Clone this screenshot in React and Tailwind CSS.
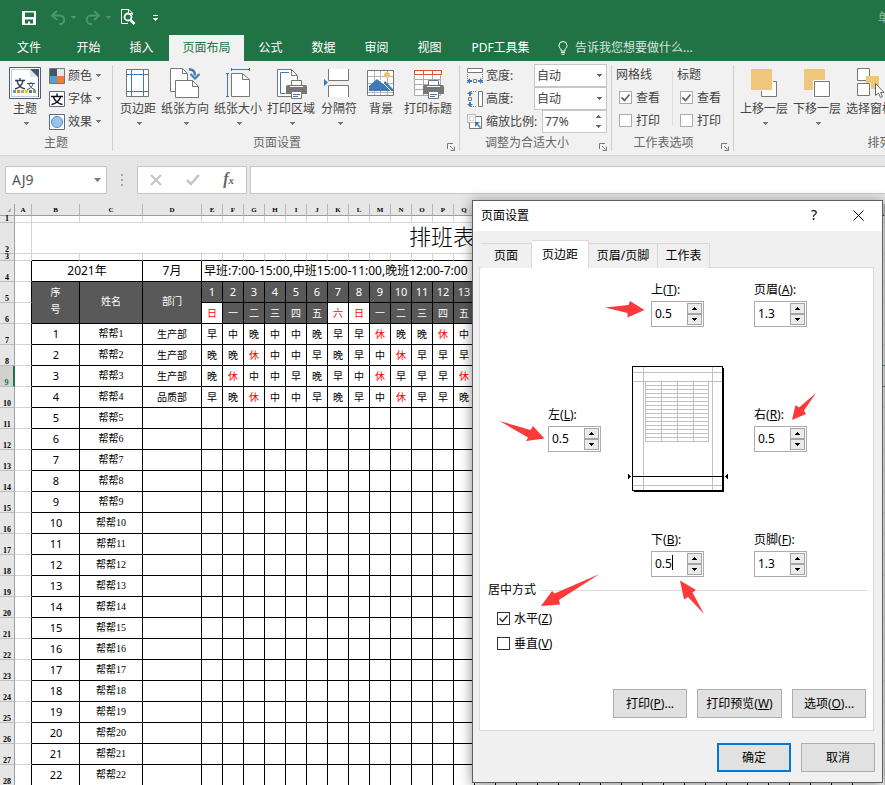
import React from "react";

const GRAY = "#797774";
const BLUE = "#3f7ab8";

function Caret({ className = "" }) {
  return (
    <svg width="5" height="3" viewBox="0 0 5 3" className={className} shapeRendering="crispEdges" aria-hidden="true">
      <path d="M0 0h5v1H0zM1 1h3v1H1zM2 2h1v1H2z" fill="currentColor" />
    </svg>
  );
}

function Icon({ box, w = 32, h = 32, children }) {
  return (
    <svg width={w} height={h} viewBox={box} fill="none" className="shrink-0" aria-hidden="true">
      {children}
    </svg>
  );
}

/* ---------- title bar and tabs ---------- */

function TitleBar() {
  return (
    <div className="flex h-[35px] shrink-0 items-center justify-between overflow-hidden pl-[21px] text-white">
      <div className="flex items-center">
        <button type="button" aria-label="保存">
          <Icon box="0 0 16 16" w={16} h={16}>
            <path d="M1 1h14v14H1z" fill="#fff" />
            <path d="M4 2.500h9v4.500H4zM4 9.500h8v4H9v-2H7v2H4z" fill="#217346" />
          </Icon>
        </button>
        <button type="button" aria-label="撤消" className="ml-[13px] flex items-center text-[#4f9370]">
          <Icon box="0 0 16 16" w={16} h={16}>
            <path d="M2 5.500h8a4 4 0 0 1 0 8.500H9" stroke="currentColor" strokeWidth="2" />
            <path d="M7 1 2 5.500 7 10" stroke="currentColor" strokeWidth="2" />
          </Icon>
          <Caret className="ml-[5px]" />
        </button>
        <button type="button" aria-label="恢复" className="ml-[9px] flex items-center text-[#4f9370]">
          <Icon box="0 0 16 16" w={16} h={16}>
            <path d="M14 5.500H6A4 4 0 0 0 6 14h1" stroke="currentColor" strokeWidth="2" />
            <path d="m9 1 5 4.500L9 10" stroke="currentColor" strokeWidth="2" />
          </Icon>
          <Caret className="ml-[5px]" />
        </button>
        <button type="button" aria-label="打印预览" className="ml-[9px] pb-[3px]">
          <Icon box="0 0 16 17" w={16} h={17}>
            <path d="M12.500 7V5L9 1.500H1.500v14H8M8.500 1.500V5.500h4" stroke="#fff" />
            <circle cx="8" cy="9" r="3.500" stroke="#fff" strokeWidth="1.800" />
            <path d="m10.500 12 4 4" stroke="#fff" strokeWidth="2.500" />
          </Icon>
        </button>
        <button type="button" aria-label="自定义快速访问工具栏" className="ml-[17px] flex flex-col items-center gap-[2px]">
          <span className="h-px w-[5px] bg-white" />
          <Caret />
        </button>
      </div>
      <span className="-mr-[5px] text-[12px] text-[#92bea5]">单</span>
    </div>
  );
}

const TABS = ["公式", "数据", "审阅", "视图"];

function TabStrip() {
  const tab = "h-full w-[53px] shrink-0";
  return (
    <nav className="flex h-[26px] shrink-0 items-center text-[12px] whitespace-nowrap text-white">
      <button type="button" className="h-full w-[62px] shrink-0 pr-1">文件</button>
      <button type="button" className={tab}>开始</button>
      <button type="button" className={tab}>插入</button>
      <button type="button" className="ml-px h-full w-[75px] shrink-0 bg-[#f1f1f1] text-[#217346]">页面布局</button>
      {TABS.map((t) => (
        <button type="button" key={t} className={tab}>{t}</button>
      ))}
      <button type="button" className="h-full w-[89px] shrink-0">PDF工具集</button>
      <button type="button" className="ml-[13px] flex h-full items-center gap-[7px] text-[#d5e6dc]">
        <Icon box="0 0 10 14" w={10} h={14}>
          <path d="M3 10V8.500C2.500 7.500 1 6.500 1 4.500a4 4 0 0 1 8 0c0 2-1.500 3-2 4V10zM3 11.500h4M3.500 13.300h3" stroke="#fff" />
        </Icon>
        告诉我您想要做什么...
      </button>
    </nav>
  );
}

/* ---------- ribbon ---------- */

function Launcher() {
  return (
    <button type="button" aria-label="更多选项" className="absolute right-[4px] bottom-0">
      <Icon box="0 0 8 8" w={8} h={8}>
        <path d="M.5 6V.5H6M3 3l3.500 3.500M7.500 3.500v4h-4" stroke="#777" />
      </Icon>
    </button>
  );
}

function Group({ title, className = "", titleClass = "", launcher, children }) {
  return (
    <section className={`relative flex h-[86px] shrink-0 flex-col border-r border-[#d2d0ce] ${className}`}>
      <div className="flex h-[71px]">{children}</div>
      <h2 className={`text-center text-[12px] leading-[16px] whitespace-nowrap text-[#666] ${titleClass}`}>{title}</h2>
      {launcher && <Launcher />}
    </section>
  );
}

function BigButton({ label, caret = true, className = "", children }) {
  return (
    <button type="button" className={`flex shrink-0 flex-col items-center whitespace-nowrap ${className}`}>
      <span className="mt-[2px] flex h-[33px] items-start">{children}</span>
      <span className="leading-[18px]">{label}</span>
      {caret && <Caret className="mt-[4px] ml-[2px] text-[#777]" />}
    </button>
  );
}

function SmallButton({ label, children }) {
  return (
    <button type="button" className="flex h-[23px] items-center">
      {children}
      <span className="ml-[3px]">{label}</span>
      <Caret className="ml-[4px] text-[#777]" />
    </button>
  );
}

function Printer({ x, y }) {
  return (
    <g transform={`translate(${x} ${y})`}>
      <path d="M5.500 7V.5h10V7" fill="#fff" stroke={GRAY} />
      <path d="M2 5h17a2 2 0 0 1 2 2v7H0V7a2 2 0 0 1 2-2z" fill={GRAY} />
      <path d="M4 5h13v2H4z" fill="#fff" />
      <path d="M4 5.500h13" stroke={BLUE} />
      <path d="M5.500 11.500h10v7h-10z" fill="#fff" stroke={GRAY} />
      <path d="M7 14.500h7M7 16.500h5" stroke={BLUE} />
    </g>
  );
}

function ThemeGroup() {
  return (
    <Group title="主题" className="w-[113px]">
      <BigButton label="主题" className="ml-[9px] w-[32px]">
        <Icon box="0 0 32 32">
          <path d="M.5.500h31v31H.5z" fill="#fff" stroke="#4a5a78" />
          <path d="M2.500 2.500h27v27h-27z" stroke="#c5cad3" />
          <path d="M21 2h9v28h-1V10h-8z" fill="#445570" />
          <path d="m21 2 8 8h-8z" fill="#dfe3ea" />
          <path d="M6 13.500h10M11 11v2.500M8 14c1 4 4 7 8 8M14 14c-1 4-4 7-8 8" stroke="#333f55" strokeWidth="1.300" />
          <path d="M18 16.500h8M22 15v1.500M20 17c1 3 3 5 6 5.500M24 17c-1 3-3 5-6 5.500" stroke="#445570" />
          <path d="M4 23h3v3H4z" fill="#5b9bd5" />
          <path d="M8 23h3v3H8z" fill="#ed7d31" />
          <path d="M12 23h3v3h-3z" fill="#a5a5a5" />
          <path d="M16 23h3v3h-3z" fill="#ffc000" />
          <path d="M20 23h3v3h-3z" fill="#4472c4" />
          <path d="M24 23h3v3h-3z" fill="#70ad47" />
        </Icon>
      </BigButton>
      <div className="-mt-px ml-[8px] flex flex-col">
        <SmallButton label="颜色">
          <Icon box="0 0 16 16" w={16} h={16}>
            <path d="M.5.500h15v15H.5z" fill="#fff" stroke={GRAY} />
            <path d="M1 1h7v7H1z" fill="#44546a" />
            <path d="M8 1h7v7H8z" fill="#e7e6e6" />
            <path d="M1 8h7v7H1z" fill="#5b9bd5" />
            <path d="M8 8h7v7H8z" fill="#ed7d31" />
          </Icon>
        </SmallButton>
        <SmallButton label="字体">
          <Icon box="0 0 16 16" w={16} h={16}>
            <path d="M.5.500h15v15H.5z" fill="#fff" stroke="#5b6b85" />
            <path d="M2 5.500h12M8 2.500v3M4.500 6c1 4 5 7 9 7.500M11.500 6c-1 4-5 7-9 7.500" stroke="#111" strokeWidth="1.400" />
          </Icon>
        </SmallButton>
        <SmallButton label="效果">
          <Icon box="0 0 16 16" w={16} h={16}>
            <path d="M.5.500h15v15H.5z" fill="#fff" stroke="#5b6b85" />
            <circle cx="8" cy="8" r="5.500" fill="#9cc3e8" stroke="#4d8ac9" />
          </Icon>
        </SmallButton>
      </div>
    </Group>
  );
}

function PageSetupGroup() {
  return (
    <Group title="页面设置" className="w-[347px]" titleClass="pr-[18px]" launcher>
      <div className="flex gap-[5px] pl-[7px]">
        <BigButton label="页边距">
          <Icon box="122 67 32 32">
            <path d="M126.500 69.500h22v27h-22z" fill="#fff" stroke={GRAY} />
            <path d="M131.500 70v26M143.500 70v26M127 74.500h21M127 91.500h21" stroke={BLUE} />
          </Icon>
        </BigButton>
        <BigButton label="纸张方向">
          <Icon box="169 67 32 32">
            <path d="M170.500 68.500h12l5 5v18h-17z" fill="#fff" stroke={GRAY} />
            <path d="M182.500 68.500v5h5" stroke={GRAY} />
            <path d="M175.500 80.500h17l6 6v11h-23z" fill="#fff" stroke={GRAY} />
            <path d="M192.500 80.500v6h6" stroke={GRAY} />
            <path d="M189 69.500c4-.5 6 2 6 6" stroke={BLUE} strokeWidth="2.500" />
            <path d="m190.500 74 4.500 4.500 4.500-4.500" stroke={BLUE} strokeWidth="2" />
          </Icon>
        </BigButton>
        <BigButton label="纸张大小">
          <Icon box="222 67 32 32">
            <path d="M231.500 73.500h11l7 6v17h-18z" fill="#fff" stroke={GRAY} />
            <path d="M242.500 73.500v6h7" stroke={GRAY} />
            <path d="M231.500 69.500h18M231.500 68v3M249.500 68v3M227.500 73.500v23M226 73.500h3M226 96.500h3" stroke={BLUE} />
          </Icon>
        </BigButton>
        <BigButton label="打印区域">
          <Icon box="275 67 32 32">
            <path d="M277.500 69.500h14l6 6v21h-20z" fill="#fff" stroke={GRAY} />
            <path d="M291.500 69.500v6h6" stroke={GRAY} />
            <path d="M289 72.500h-8.500v21h5" stroke={BLUE} />
            <Printer x={286} y={80} />
          </Icon>
        </BigButton>
        <BigButton label="分隔符" className="w-[38px]">
          <Icon box="323 67 32 32">
            <path d="M328 69h21v12h-21zM328 85h21v12h-21z" fill="#fff" />
            <path d="M328.500 69v11.500h20V69M328.500 97V85.500h20V97" stroke={GRAY} />
            <path d="m324 79 4 3.500-4 3.500z" fill={BLUE} />
          </Icon>
        </BigButton>
        <BigButton label="背景" caret={false} className="w-[36px]">
          <Icon box="365 67 32 32">
            <path d="M367.500 70.500h26v25h-26z" fill="#fff" stroke={GRAY} />
            <path d="M374.500 71v24M380.500 71v24M387.500 71v24M368 76.500h25M368 83.500h25M368 92.500h25" stroke="#b5b5b5" />
            <circle cx="387" cy="75" r="3" fill="#eec27a" />
            <path d="M369 91v-5l8-7 6 5 2-3 8 8v2z" fill={BLUE} />
            <path d="m379 79 12 12" stroke="#fff" />
          </Icon>
        </BigButton>
        <BigButton label="打印标题" caret={false}>
          <Icon box="412 67 32 32">
            <path d="M414.500 74v21.500h26V74" fill="#fff" stroke="#aaa" />
            <path d="M423.500 74v21M432.500 74v21M415 79.500h25M415 84.500h25M415 89.500h25" stroke="#aaa" />
            <path d="M414.500 70.500h27v4h-27zM423.500 70v4M432.500 70v4" fill="#fff" stroke="#d65532" />
            <Printer x={423} y={80} />
          </Icon>
        </BigButton>
      </div>
    </Group>
  );
}

function ScaleSelect({ id }) {
  return (
    <span className="grid w-[73px] items-center">
      <select
        id={id}
        className="h-[23px] w-full appearance-none border border-[#c6c6c6] bg-white px-[2px] text-[12px] leading-[20px] text-[#444] [grid-area:1/1]"
      >
        <option>自动</option>
      </select>
      <Caret className="pointer-events-none mr-[5px] justify-self-end text-[#666] [grid-area:1/1]" />
    </span>
  );
}

function ScaleGroup() {
  return (
    <Group title="调整为合适大小" className="w-[152px]" titleClass="pr-[17px]" launcher>
      <div className="-mt-px flex flex-col pl-[7px]">
        <div className="flex h-[23px] items-center">
          <Icon box="0 0 16 16" w={16} h={16}>
            <path d="M.5.500h15v4H.5z" fill="#fff" stroke={GRAY} />
            <path d="M.5 6v10M15.500 6v10" stroke={GRAY} strokeDasharray="1 1" />
            <path d="M6.500 11.500h3v3h-3z" fill="#fff" stroke={GRAY} />
            <path d="M0 13l3-3v2h2v2H3v2zM16 13l-3-3v2h-2v2h2v2z" fill={BLUE} />
          </Icon>
          <label htmlFor="scale-w" className="ml-[3px] w-[48px]">宽度:</label>
          <ScaleSelect id="scale-w" />
        </div>
        <div className="flex h-[23px] items-center">
          <Icon box="0 0 16 16" w={16} h={16}>
            <path d="M11.500.500h4v15h-4z" fill="#fff" stroke={GRAY} />
            <path d="M4 .5h6M4 15.500h6" stroke={GRAY} strokeDasharray="1 1" />
            <path d="M1.500 6.500h3v3h-3z" fill="#fff" stroke={GRAY} />
            <path d="m3 0 3 3H4v2H2V3H0zM3 16l3-3H4v-2H2v2H0z" fill={BLUE} />
          </Icon>
          <label htmlFor="scale-h" className="ml-[3px] w-[48px]">高度:</label>
          <ScaleSelect id="scale-h" />
        </div>
        <div className="flex h-[23px] items-center">
          <Icon box="0 0 16 16" w={16} h={16}>
            <path d="M2.500 8v6.500h12v-12H9" fill="#fff" stroke={GRAY} />
            <path d="M.5.500h8v8h-8z" fill="#fff" stroke={GRAY} strokeDasharray="1 1" />
            <path d="M2.500 2.500h4v4h-4z" stroke="#aaa" strokeDasharray="1 1" />
            <path d="M8 8h5l-2 2 3 3-1 1-3-3-2 2z" fill={BLUE} />
          </Icon>
          <label htmlFor="scale-p" className="ml-[3px] w-[56px] whitespace-nowrap">缩放比例:</label>
          <span className="flex h-[23px] w-[65px] items-center border border-[#c6c6c6] bg-white pr-[5px] text-[#666]">
            <input id="scale-p" defaultValue="77%" className="w-full min-w-0 bg-transparent pl-[2px] text-[12px] text-[#444]" />
            <span className="flex flex-col gap-[7px]">
              <button type="button" aria-label="增大" className="block"><Caret className="rotate-180" /></button>
              <button type="button" aria-label="减小" className="block"><Caret /></button>
            </span>
          </span>
        </div>
      </div>
    </Group>
  );
}

function Check({ label, checked, dark }) {
  return (
    <label className="flex h-[23px] items-center gap-[4px] whitespace-nowrap">
      <span className="grid">
        <input
          type="checkbox"
          defaultChecked={checked}
          className={`peer size-[13px] appearance-none border bg-white [grid-area:1/1] ${dark ? "border-[#333]" : "border-[#ababab]"}`}
        />
        <svg
          width="13"
          height="13"
          viewBox="0 0 13 13"
          className="pointer-events-none hidden [grid-area:1/1] peer-checked:block"
          aria-hidden="true"
        >
          <path d="m2.500 6.500 3 3 5-6" fill="none" stroke={dark ? "#222" : "#666"} strokeWidth={dark ? 1.200 : 1.800} />
        </svg>
      </span>
      {label}
    </label>
  );
}

function SheetOptionsGroup() {
  return (
    <Group title="工作表选项" className="w-[122px]" titleClass="pr-[18px]" launcher>
      <div className="flex w-[60px] flex-col pl-[4px]">
        <span className="h-[21px] leading-[20px]">网格线</span>
        <div className="pl-[3px]">
          <Check label="查看" checked />
          <Check label="打印" />
        </div>
      </div>
      <div className="mt-[6px] h-[55px] w-px bg-[#dcdcdc]" />
      <div className="flex flex-col pl-[4px]">
        <span className="h-[21px] leading-[20px]">标题</span>
        <div className="pl-[3px]">
          <Check label="查看" checked />
          <Check label="打印" />
        </div>
      </div>
    </Group>
  );
}

function ArrangeGroup() {
  return (
    <Group title="排列" className="w-[292px]" launcher>
      <div className="flex gap-[5px] pl-[6px]">
        <BigButton label="上移一层">
          <Icon box="748 67 32 32">
            <path d="M761.500 81.500h15v15h-15z" fill="#fff" stroke={GRAY} />
            <path d="M751 69h21v21h-21z" fill="#eec77d" />
            <path d="M772.500 81v9.500H761" stroke="#fff" />
          </Icon>
        </BigButton>
        <BigButton label="下移一层">
          <Icon box="801 67 32 32">
            <path d="M804 69h21v21h-21z" fill="#eec77d" />
            <path d="M813 80h18v18h-18z" fill="#fff" />
            <path d="M814.500 81.500h15v15h-15z" fill="#fff" stroke={GRAY} />
          </Icon>
        </BigButton>
        <BigButton label="选择窗格" caret={false}>
          <Icon box="854 67 32 32">
            <path d="M857.500 68.500h12v12h-12zM857.500 83.500h12v12h-12z" fill="#fff" stroke={GRAY} />
            <path d="M866 76h13v13h-8v-6h-5z" fill="#eec77d" />
            <path d="M875.500 83.500v12l3-2.500 2 4.500 2-1-2-4h3.500z" fill="#fff" stroke="#666" />
          </Icon>
        </BigButton>
      </div>
    </Group>
  );
}

function Ribbon() {
  return (
    <div className="flex h-[95px] shrink-0 overflow-hidden border-b border-[#d2d2d2] bg-[#f1f1f1] pt-[4px] text-[12px] text-[#444]">
      <ThemeGroup />
      <PageSetupGroup />
      <ScaleGroup />
      <SheetOptionsGroup />
      <ArrangeGroup />
    </div>
  );
}

/* ---------- formula bar ---------- */

function FormulaBar() {
  return (
    <div className="flex h-[48px] shrink-0 items-start pt-[10px] pl-[5px]">
      <div className="flex h-[28px] w-[102px] shrink-0 items-center border border-[#c6c6c6] bg-white pr-[5px]">
        <input aria-label="名称框" defaultValue="AJ9" className="w-full min-w-0 pb-px pl-[6px] text-[14px] text-[#555]" />
        <svg width="7" height="4" viewBox="0 0 7 4" className="shrink-0" aria-hidden="true">
          <path d="M0 0h7L3.500 4z" fill="#777" />
        </svg>
      </div>
      <div className="flex h-[28px] w-[30px] shrink-0 flex-col items-center justify-center gap-[3px]">
        <i className="size-[2px] bg-[#aaa]" />
        <i className="size-[2px] bg-[#aaa]" />
        <i className="size-[2px] bg-[#aaa]" />
      </div>
      <div className="flex h-[28px] w-[110px] shrink-0 items-center justify-between border border-[#c6c6c6] bg-white pr-[12px] pl-[12px]">
        <button type="button" aria-label="取消输入">
          <Icon box="0 0 12 12" w={12} h={12}>
            <path d="m1 1 10 10M11 1 1 11" stroke="#c4c4c4" strokeWidth="2" />
          </Icon>
        </button>
        <button type="button" aria-label="确认输入">
          <Icon box="0 0 14 12" w={14} h={12}>
            <path d="m1 6 4 4 8-9" stroke="#c4c4c4" strokeWidth="2.500" />
          </Icon>
        </button>
        <button type="button" className="pb-[2px] font-['Liberation_Serif',serif] text-[16px] leading-[20px] font-bold text-[#666] italic">
          f<span className="text-[11px]">x</span>
        </button>
      </div>
      <input aria-label="编辑栏" className="ml-[3px] h-[28px] min-w-0 grow border border-r-0 border-[#c6c6c6] bg-white px-1 text-[12px]" />
    </div>
  );
}

/* ---------- worksheet ---------- */

const DAYS = Array.from({ length: 31 }, (_, i) => i + 1);
const WEEK = ["日", "一", "二", "三", "四", "五", "六"];
const weekday = (d) => (d < 8 ? WEEK[d - 1] : WEEK[(d - 8) % 7]);
const isRest = (w) => w === "日" || w === "六";

const COLS = ["A", "B", "C", "D", ...Array.from({ length: 22 }, (_, i) => String.fromCharCode(69 + i)),
  "AA", "AB", "AC", "AD", "AE", "AF", "AG", "AH", "AI", "AJ"];

const STAFF = [
  { dept: "生产部", shifts: "早中晚中中晚早早休晚晚休中" },
  { dept: "生产部", shifts: "晚晚休中中早晚早中休早早早" },
  { dept: "生产部", shifts: "晚休中中早晚早中休早早早休" },
  { dept: "品质部", shifts: "早晚休中中早晚早中休早早晚" },
];

const G = "border-r border-b border-[#d4d4d4]";
const K = "border-r border-b border-black";
const A = "border-r border-b border-r-black border-b-[#d4d4d4]";

function RowHead({ n, h = "h-[20px]" }) {
  const active = n === 9;
  return (
    <th
      scope="row"
      className={`border-b p-0 ${
        active
          ? "border-r-2 border-r-[#217346] border-b-[#bdbdbd] bg-[#d2d2d2] text-[#217346]"
          : "border-r border-r-[#a0a0a0] border-b-[#bdbdbd] bg-[#e6e6e6] text-black"
      }`}
    >
      <div className={`flex items-end justify-center font-['Liberation_Serif',serif] text-[8px] leading-[6px] font-bold ${h}`}>{n}</div>
    </th>
  );
}

function Sheet() {
  return (
    <div className="min-h-0 grow overflow-hidden bg-white">
      <table className="w-full min-w-[885px] table-fixed border-separate border-spacing-0 text-center text-black">
        <colgroup>
          <col className="w-[15px]" />
          <col className="w-[17px]" />
          <col className="w-[48px]" />
          <col className="w-[63px]" />
          <col className="w-[59px]" />
          {DAYS.map((d) => (
            <col key={d} className="w-[21px]" />
          ))}
          <col />
        </colgroup>
        <thead>
          <tr className="bg-[#e6e6e6] font-['Liberation_Serif',serif] text-[7px] leading-[12px]">
            <th className="border-r border-b border-[#a0a0a0] p-0">
              <div className="flex h-[11px] items-end justify-end pr-[3px] pb-[3px]">
                <svg width="4" height="4" viewBox="0 0 4 4" aria-hidden="true"><path d="M4 0v4H0z" fill="#aaa" /></svg>
              </div>
            </th>
            {COLS.map((c) => (
              <th
                key={c}
                scope="col"
                className={`border-r border-b p-0 font-bold ${
                  c === "AJ" ? "border-r-[#b5b5b5] border-b-[#217346] bg-[#d2d2d2] text-[#217346]" : "border-r-[#b5b5b5] border-b-[#9b9b9b]"
                }`}
              >
                <div className="h-[11px]">{c}</div>
              </th>
            ))}
          </tr>
        </thead>
        <tbody className="text-[10px] leading-[20px]">
          <tr>
            <RowHead n={1} h="h-[6px]" />
            {COLS.map((c) => (
              <td key={c} className={`${G} p-0`} />
            ))}
          </tr>
          <tr>
            <RowHead n={2} h="h-[30px]" />
            <td className={`${G} p-0`} />
            <td colSpan={34} className={`${G} p-0 pb-[4px] text-[22px] leading-[26px] font-light`}>排班表</td>
            <td className={`${G} p-0`} />
          </tr>
          <tr>
            <RowHead n={3} h="h-[6px]" />
            {COLS.map((c) => (
              <td
                key={c}
                className={`border-r border-b border-r-[#d4d4d4] p-0 ${c === "A" || c === "AJ" ? "border-b-[#d4d4d4]" : "border-b-black"}`}
              />
            ))}
          </tr>
          <tr className="text-[12px]">
            <RowHead n={4} />
            <td className={`${A} p-0`} />
            <td colSpan={2} className={`${K} p-0`}>2021年</td>
            <td className={`${K} p-0`}>7月</td>
            <td colSpan={31} className={`${K} p-0 pl-[2px] text-left`}>早班:7:00-15:00,中班15:00-11:00,晚班12:00-7:00</td>
            <td className={`${G} p-0`} />
          </tr>
          <tr className="text-white">
            <RowHead n={5} />
            <td className={`${A} p-0`} />
            <td rowSpan={2} className={`${K} bg-[#595959] p-0 pb-[3px] leading-[17px]`}>序<br />号</td>
            <td rowSpan={2} className={`${K} bg-[#595959] p-0 pb-[3px]`}>姓名</td>
            <td rowSpan={2} className={`${K} bg-[#595959] p-0 pb-[3px]`}>部门</td>
            {DAYS.map((d) => (
              <td key={d} className={`${K} bg-[#595959] p-0 text-[11px]`}>{d}</td>
            ))}
            <td className={`${G} p-0`} />
          </tr>
          <tr>
            <RowHead n={6} />
            <td className={`${A} p-0`} />
            {DAYS.map((d) => {
              const w = weekday(d);
              return (
                <td key={d} className={`${K} p-0 ${isRest(w) ? "bg-white text-[#ff0000]" : "bg-[#595959] text-white"}`}>{w}</td>
              );
            })}
            <td className={`${G} p-0`} />
          </tr>
          {Array.from({ length: 22 }, (_, i) => {
            const person = STAFF[i];
            return (
              <tr key={i}>
                <RowHead n={i + 7} />
                <td className={`${A} p-0`} />
                <td className={`${K} p-0 pl-px text-[11px]`}>{i + 1}</td>
                <td className={`${K} p-0 font-['Liberation_Serif','Noto_Sans_CJK_SC',serif]`}>{`帮帮${i + 1}`}</td>
                <td className={`${K} p-0`}>{person ? person.dept : ""}</td>
                {DAYS.map((d) => {
                  const s = person ? person.shifts[d - 1] : "";
                  return (
                    <td key={d} className={`${K} p-0 ${s === "休" ? "text-[#ff0000]" : ""}`}>{s}</td>
                  );
                })}
                <td
                  className={`border-r border-b border-r-[#d4d4d4] p-0 ${
                    i === 1 || i === 2 ? "border-b-[#217346]" : "border-b-[#d4d4d4]"
                  }`}
                />
              </tr>
            );
          })}
        </tbody>
      </table>
    </div>
  );
}

/* ---------- page setup dialog ---------- */

function Spin({ id, name, hotkey, value, editing }) {
  const btn = "flex h-[11px] w-[15px] items-center justify-center border border-[#a5a5a5] bg-[#ebebeb]";
  return (
    <div className="flex w-[53px] shrink-0 flex-col gap-[2px]">
      <label htmlFor={id} className="leading-[18px] whitespace-nowrap">
        {name}(<u>{hotkey}</u>):
      </label>
      <div className="flex h-[26px] items-center border border-[#ababab] bg-white pr-px">
        <span className="relative flex min-w-0 grow">
          <input id={id} defaultValue={value} className="h-[22px] w-full min-w-0 bg-transparent pb-[2px] pl-[3px] text-[12px] leading-[18px]" />
          {editing && <i className="absolute top-[2px] left-[20px] h-[15px] w-px bg-black" />}
        </span>
        <span className="flex shrink-0 flex-col">
          <button type="button" aria-label={`${name}增大`} className={btn}><Caret className="rotate-180" /></button>
          <button type="button" aria-label={`${name}减小`} className={btn}><Caret /></button>
        </span>
      </div>
    </div>
  );
}

const PREVIEW_ROWS = Array.from({ length: 16 }, (_, i) => 15.5 + i * 4);
const PREVIEW_COLS = [17.5, 33.5, 49.5, 65.5, 80.5];

function PagePreview() {
  return (
    <svg width="101" height="126" viewBox="0 0 101 126" className="mr-[25px] ml-[27px] shrink-0" shapeRendering="crispEdges" aria-hidden="true">
      <path d="M6 2h90v124H6z" fill="#000" />
      <path d="M4.500.500h90v124h-90z" fill="#fff" stroke="#000" />
      <path d="M15.500 1v123M84.500 1v123M5 6.500h89M5 15.500h89M5 119.500h89" stroke="#c0c0c0" />
      {PREVIEW_ROWS.map((y) => (
        <path key={y} d={`M17 ${y}h64`} stroke="#c0c0c0" />
      ))}
      {PREVIEW_COLS.map((x) => (
        <path key={x} d={`M${x} 15v61`} stroke="#c0c0c0" />
      ))}
      <path d="M5 110.500h90" stroke="#000" />
      <path d="M0 108h1v5H0zM1 109h1v3H1zM2 110h1v1H2zM99 108h1v5h-1zM98 109h1v3h-1zM97 110h1v1h-1z" fill="#000" />
    </svg>
  );
}

function Arrows() {
  return (
    <svg
      width="400"
      height="300"
      viewBox="480 340 400 300"
      className="pointer-events-none absolute top-[139px] left-[7px] overflow-visible"
      fill="#fd3a3a"
      aria-hidden="true"
    >
      <path d="M605 307.500 628.500 305l1.500-4 14.500 9-17 7.500V313z" />
      <path d="m499.500 421 31 9 2.500-4 11.500 12.500L526 441l2-3.500z" />
      <path d="m816 393-12 17.500 2 3.500-14 6 3.500-15 3.500 2.500z" />
      <path d="M599.500 574 559 600l1 4.500-19 1.500 11-15 2.500 2.500z" />
      <path d="m680 580.500 16 9.500-3.500 2.500L704 614l-16-17-4 2.500z" />
    </svg>
  );
}

function DlgButton({ children, primary, wide }) {
  return (
    <button
      type="button"
      className={`h-[29px] text-center whitespace-nowrap ${wide ? "w-[85px]" : "w-[74px]"} ${
        primary ? "border-2 border-[#0078d7]" : "border border-[#adadad]"
      } bg-[#e1e1e1]`}
    >
      {children}
    </button>
  );
}

function PageSetupDialog() {
  const tab = "h-[25px] border-t border-r border-[#d9d9d9] bg-[#f0f0f0] text-center";
  return (
    <div
      role="dialog"
      aria-label="页面设置"
      className="absolute top-[200px] left-[472px] flex w-[411px] flex-col border border-[#5f5f5f] bg-[#f0f0f0] text-[12px] leading-[16px] text-black shadow-[0_2px_12px_rgba(0,0,0,0.45)]"
    >
      <header className="flex h-[30px] items-center bg-white pr-[18px] pl-[8px]">
        <h1 className="grow">页面设置</h1>
        <button type="button" aria-label="帮助" className="mr-[36px] pb-[2px] text-[14px]">?</button>
        <button type="button" aria-label="关闭" className="pb-[2px]">
          <Icon box="0 0 11 11" w={11} h={11}>
            <path d="m.5.500 10 10M10.500.500l-10 10" stroke="#000" />
          </Icon>
        </button>
      </header>

      <div className="px-[6px] pt-[9px]">
        <div role="tablist" className="-mb-px flex items-end pl-[2px]">
          <button type="button" role="tab" className={`${tab} w-[51px]`}>页面</button>
          <button
            type="button"
            role="tab"
            aria-selected="true"
            className="h-[28px] w-[57px] border-t border-r border-[#d9d9d9] bg-white text-center"
          >
            页边距
          </button>
          <button type="button" role="tab" className={`${tab} w-[69px]`}>页眉/页脚</button>
          <button type="button" role="tab" className={`${tab} w-[52px]`}>工作表</button>
        </div>

        <div className="mr-[2px] border border-[#d9d9d9] bg-white pb-[12px]">
          <div className="flex flex-col gap-[39px] pt-[13px] pl-[68px]">
            <div className="flex gap-[50px] pl-[103px]">
              <Spin id="m-top" name="上" hotkey="T" value="0.5" />
              <Spin id="m-header" name="页眉" hotkey="A" value="1.3" />
            </div>
            <div className="flex items-center">
              <Spin id="m-left" name="左" hotkey="L" value="0.5" />
              <PagePreview />
              <Spin id="m-right" name="右" hotkey="R" value="0.5" />
            </div>
            <div className="flex gap-[50px] pl-[103px]">
              <Spin id="m-bottom" name="下" hotkey="B" value="0.5" editing />
              <Spin id="m-footer" name="页脚" hotkey="F" value="1.3" />
            </div>
          </div>

          <fieldset className="pt-[5px]">
            <div className="flex items-center gap-[5px] pr-[6px] pl-[8px]">
              <span>居中方式</span>
              <span className="h-px grow bg-[#dcdcdc]" />
            </div>
            <div className="flex flex-col items-start gap-[2px] pt-[9px] pl-[17px]">
              <Check dark checked label={<span>水平(<u>Z</u>)</span>} />
              <Check dark label={<span>垂直(<u>V</u>)</span>} />
            </div>
          </fieldset>

          <div className="flex justify-end gap-[10px] pt-[34px] pr-[7px]">
            <DlgButton>打印(<u>P</u>)...</DlgButton>
            <DlgButton wide>打印预览(<u>W</u>)</DlgButton>
            <DlgButton>选项(<u>O</u>)...</DlgButton>
          </div>
        </div>
      </div>

      <footer className="flex justify-end gap-[10px] pt-[12px] pr-[7px] pb-[10px]">
        <DlgButton primary>确定</DlgButton>
        <DlgButton>取消</DlgButton>
      </footer>

      <Arrows />
    </div>
  );
}

export default function App() {
  return (
    <div className="relative flex h-screen w-full flex-col overflow-hidden bg-[#e6e6e6] font-['Noto_Sans','Noto_Sans_CJK_SC',sans-serif]">
      <div className="shrink-0 bg-[#217346]">
        <TitleBar />
        <TabStrip />
      </div>
      <Ribbon />
      <FormulaBar />
      <Sheet />
      <PageSetupDialog />
    </div>
  );
}
